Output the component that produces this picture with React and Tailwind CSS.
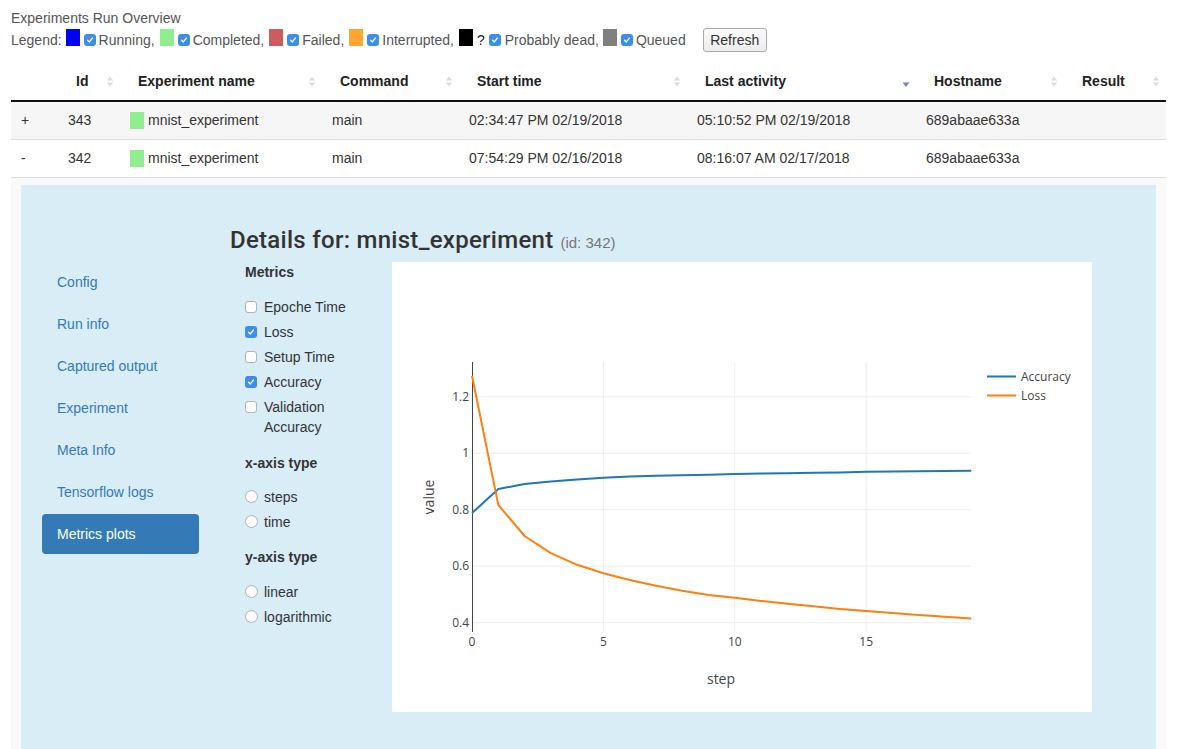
import React from "react";

const ACC = [0.788, 0.873, 0.891, 0.9, 0.907, 0.913, 0.917, 0.92, 0.922, 0.924, 0.926, 0.928, 0.929, 0.931, 0.932, 0.934, 0.935, 0.936, 0.937, 0.938];
const LOSS = [1.274, 0.817, 0.707, 0.646, 0.605, 0.575, 0.551, 0.531, 0.513, 0.498, 0.488, 0.477, 0.467, 0.458, 0.449, 0.441, 0.434, 0.427, 0.421, 0.415];

const X = (s) => 80 + s * 26.28;
const Y = (v) => 360.7 - (v - 0.4) * 282.5;
const pts = (arr) => arr.map((v, i) => `${X(i).toFixed(1)},${Y(v).toFixed(1)}`).join(" ");

function Check({ checked }) {
  return checked ? (
    <span className="inline-flex h-[12px] w-[12px] shrink-0 items-center justify-center rounded-[3px] bg-[#3b8df0]">
      <svg width="8" height="8" viewBox="0 0 8 8">
        <path d="M1.6 4.3 L3.3 5.9 L6.4 2.1" stroke="white" strokeWidth="1.4" fill="none" strokeLinecap="round" strokeLinejoin="round" />
      </svg>
    </span>
  ) : (
    <span className="inline-block h-[12px] w-[12px] shrink-0 rounded-[3px] border border-[#b3b3b3] bg-white" />
  );
}

function Radio() {
  return <span className="inline-block h-[13px] w-[13px] shrink-0 rounded-full border border-[#b3b3b3] bg-white shadow-[inset_0_1px_1px_rgba(0,0,0,0.06)]" />;
}

function SortIcon({ active }) {
  if (active)
    return (
      <svg width="8" height="16" viewBox="0 0 8 16">
        <path d="M0.5 8.5 L7.5 8.5 L4 13 Z" fill="#7b7bdc" />
      </svg>
    );
  return (
    <svg width="8" height="16" viewBox="0 0 8 16">
      <path d="M0.8 6.6 L7.2 6.6 L4 2.6 Z" fill="#dcdcdc" />
      <path d="M0.8 8.6 L7.2 8.6 L4 12.6 Z" fill="#dcdcdc" />
    </svg>
  );
}

function Legend() {
  const Sq = ({ c }) => <span className={`inline-block h-[17px] w-[14px] ${c}`} />;
  return (
    <div className="flex h-[24px] items-center text-[14px] text-[#555]">
      <span>Legend:</span>
      <span className="ml-[4px]"><Sq c="bg-[#0000ff]" /></span>
      <span className="ml-[4px] flex"><Check checked /></span>
      <span className="ml-[3px]">Running,</span>
      <span className="ml-[5px]"><Sq c="bg-[#90ee90]" /></span>
      <span className="ml-[4px] flex"><Check checked /></span>
      <span className="ml-[3px]">Completed,</span>
      <span className="ml-[5px]"><Sq c="bg-[#cd5c5c]" /></span>
      <span className="ml-[4px] flex"><Check checked /></span>
      <span className="ml-[3px]">Failed,</span>
      <span className="ml-[5px]"><Sq c="bg-[#ffa631]" /></span>
      <span className="ml-[4px] flex"><Check checked /></span>
      <span className="ml-[3px]">Interrupted,</span>
      <span className="ml-[5px]"><Sq c="bg-black" /></span>
      <span className="ml-[4px] text-[#222]">?</span>
      <span className="ml-[4px] flex"><Check checked /></span>
      <span className="ml-[4px]">Probably dead,</span>
      <span className="ml-[4px]"><Sq c="bg-[#808080]" /></span>
      <span className="ml-[4px] flex"><Check checked /></span>
      <span className="ml-[3px]">Queued</span>
      <button className="ml-[17px] h-[24px] w-[64px] rounded-[3px] border border-[#aaaaaa] bg-gradient-to-b from-[#fbfbfb] to-[#ececec] text-[14px] text-[#333]">
        Refresh
      </button>
    </div>
  );
}

const COLS = [
  { w: 47, label: "" },
  { w: 62, label: "Id" },
  { w: 202, label: "Experiment name" },
  { w: 137, label: "Command" },
  { w: 228, label: "Start time" },
  { w: 229, label: "Last activity", active: true },
  { w: 148, label: "Hostname" },
  { w: 102, label: "Result" },
];

const ROWS = [
  { t: "+", id: "343", start: "02:34:47 PM 02/19/2018", last: "05:10:52 PM 02/19/2018", striped: true },
  { t: "-", id: "342", start: "07:54:29 PM 02/16/2018", last: "08:16:07 AM 02/17/2018", striped: false },
];

function Chart() {
  const yTicks = [
    [0.4, "0.4"],
    [0.6, "0.6"],
    [0.8, "0.8"],
    [1, "1"],
    [1.2, "1.2"],
  ];
  const xTicks = [0, 5, 10, 15];
  return (
    <svg width="700" height="450" viewBox="0 0 700 450" className="block" style={{ fontFamily: '"Open Sans", Arial, sans-serif' }}>
      <rect width="700" height="450" fill="white" />
      {yTicks.map(([v]) => (
        <line key={v} x1="80" x2="579" y1={Y(v)} y2={Y(v)} stroke="#eeeeee" strokeWidth="1" />
      ))}
      {xTicks.slice(1).map((s) => (
        <line key={s} x1={X(s)} x2={X(s)} y1="100" y2="370" stroke="#eeeeee" strokeWidth="1" />
      ))}
      <line x1="80.5" x2="80.5" y1="100" y2="370" stroke="#444" strokeWidth="1" />
      <polyline points={pts(ACC)} fill="none" stroke="#1f77b4" strokeWidth="2" strokeLinejoin="round" />
      <polyline points={pts(LOSS)} fill="none" stroke="#ff7f0e" strokeWidth="2" strokeLinejoin="round" />
      {yTicks.map(([v, l]) => (
        <text key={l} x="77" y={Y(v) + 4.2} textAnchor="end" fontSize="12" fill="#444">
          {l}
        </text>
      ))}
      {xTicks.map((s) => (
        <text key={s} x={X(s)} y="383.5" textAnchor="middle" fontSize="12" fill="#444">
          {s}
        </text>
      ))}
      <text x="329" y="422" textAnchor="middle" fontSize="14" fill="#444">
        step
      </text>
      <text x="0" y="0" transform="translate(42 235) rotate(-90)" textAnchor="middle" fontSize="14" fill="#444">
        value
      </text>
      <line x1="595" x2="624" y1="114.5" y2="114.5" stroke="#1f77b4" strokeWidth="2" />
      <text x="629" y="118.8" fontSize="12" fill="#444">
        Accuracy
      </text>
      <line x1="595" x2="624" y1="133.5" y2="133.5" stroke="#ff7f0e" strokeWidth="2" />
      <text x="629" y="137.8" fontSize="12" fill="#444">
        Loss
      </text>
    </svg>
  );
}

function Details() {
  const nav = ["Config", "Run info", "Captured output", "Experiment", "Meta Info", "Tensorflow logs", "Metrics plots"];
  const metrics = [
    ["Epoche Time", false],
    ["Loss", true],
    ["Setup Time", false],
    ["Accuracy", true],
  ];
  return (
    <div className="flex bg-[#d9edf7] pb-[60px] pl-[21px]">
      <div className="w-[157px] shrink-0 pt-[77px]">
        <ul className="flex flex-col gap-[2px]">
          {nav.map((n) => {
            const active = n === "Metrics plots";
            return (
              <li
                key={n}
                className={`h-[40px] rounded-[4px] px-[15px] py-[10px] text-[14px] leading-[20px] ${
                  active ? "bg-[#337ab7] text-white" : "text-[#337ab7]"
                }`}
              >
                {n}
              </li>
            );
          })}
        </ul>
      </div>
      <div className="ml-[31px] pt-[42px]">
        <h3 className="flex items-baseline font-['Roboto',Arial,sans-serif] text-[24px] font-medium leading-[26px] tracking-[0.28px] text-[#333]">
          Details for: mnist_experiment
          <small className="ml-[7px] font-['Liberation_Sans',Arial,sans-serif] text-[15px] font-normal tracking-normal text-[#777]">(id: 342)</small>
        </h3>
        <div className="mt-[6px] flex pl-[15px]">
          <div className="w-[147px] shrink-0 pr-[15px] text-[14px] leading-[20px] text-[#333]">
            <div className="font-bold">Metrics</div>
            <div className="mt-[15px] flex flex-col gap-[5px]">
              {metrics.map(([m, c]) => (
                <label key={m} className="flex items-center gap-[7px]">
                  <Check checked={c} />
                  <span>{m}</span>
                </label>
              ))}
              <label className="flex items-start gap-[7px]">
                <span className="mt-[4px] flex"><Check /></span>
                <span>Validation Accuracy</span>
              </label>
            </div>
            <div className="mt-[16px] font-bold">x-axis type</div>
            <div className="mt-[14px] flex flex-col gap-[5px]">
              <label className="flex items-center gap-[6px]"><Radio /><span>steps</span></label>
              <label className="flex items-center gap-[6px]"><Radio /><span>time</span></label>
            </div>
            <div className="mt-[15px] font-bold">y-axis type</div>
            <div className="mt-[15px] flex flex-col gap-[5px]">
              <label className="flex items-center gap-[6px]"><Radio /><span>linear</span></label>
              <label className="flex items-center gap-[6px]"><Radio /><span>logarithmic</span></label>
            </div>
          </div>
          <Chart />
        </div>
      </div>
    </div>
  );
}

export default function App() {
  return (
    <div className="min-h-screen bg-white px-[11px] pt-[8px] font-['Liberation_Sans',Arial,sans-serif] text-[14px] text-[#333]">
      <div className="h-[20px] leading-[20px] text-[#555]">Experiments Run Overview</div>
      <Legend />
      <table className="mt-[11px] w-full table-fixed border-collapse text-[14px]">
        <colgroup>
          {COLS.map((c, i) => (
            <col key={i} style={{ width: c.w }} />
          ))}
        </colgroup>
        <thead>
          <tr>
            {COLS.map((c, i) => (
              <th key={i} className="relative h-[38px] border-b-2 border-[#111] p-0 text-left font-bold text-[#222]">
                {c.label && (
                  <div className="flex items-center justify-between pl-[18px] pr-[6px]">
                    <span>{c.label}</span>
                    <SortIcon active={c.active} />
                  </div>
                )}
              </th>
            ))}
          </tr>
        </thead>
        <tbody>
          {ROWS.map((r) => (
            <tr key={r.id} className={`h-[38px] border-b border-[#dddddd] ${r.striped ? "bg-[#f6f6f6]" : "bg-white"}`}>
              <td className="pl-[10px] pt-[1px]">{r.t}</td>
              <td className="pl-[10px] pt-[1px]">{r.id}</td>
              <td className="pl-[10px] pt-[1px]">
                <div className="flex items-center gap-[4px]">
                  <span className="inline-block h-[17px] w-[14px] bg-[#90ee90]" />
                  <span>mnist_experiment</span>
                </div>
              </td>
              <td className="pl-[10px] pt-[1px]">main</td>
              <td className="pl-[10px] pt-[1px]">{r.start}</td>
              <td className="pl-[10px] pt-[1px]">{r.last}</td>
              <td className="pl-[10px] pt-[1px]">689abaae633a</td>
              <td className="pl-[10px] pt-[1px]"></td>
            </tr>
          ))}
          <tr className="bg-[#f9f9f9]">
            <td colSpan={8} className="px-[10px] pt-[7px]">
              <Details />
            </td>
          </tr>
        </tbody>
      </table>
    </div>
  );
}
